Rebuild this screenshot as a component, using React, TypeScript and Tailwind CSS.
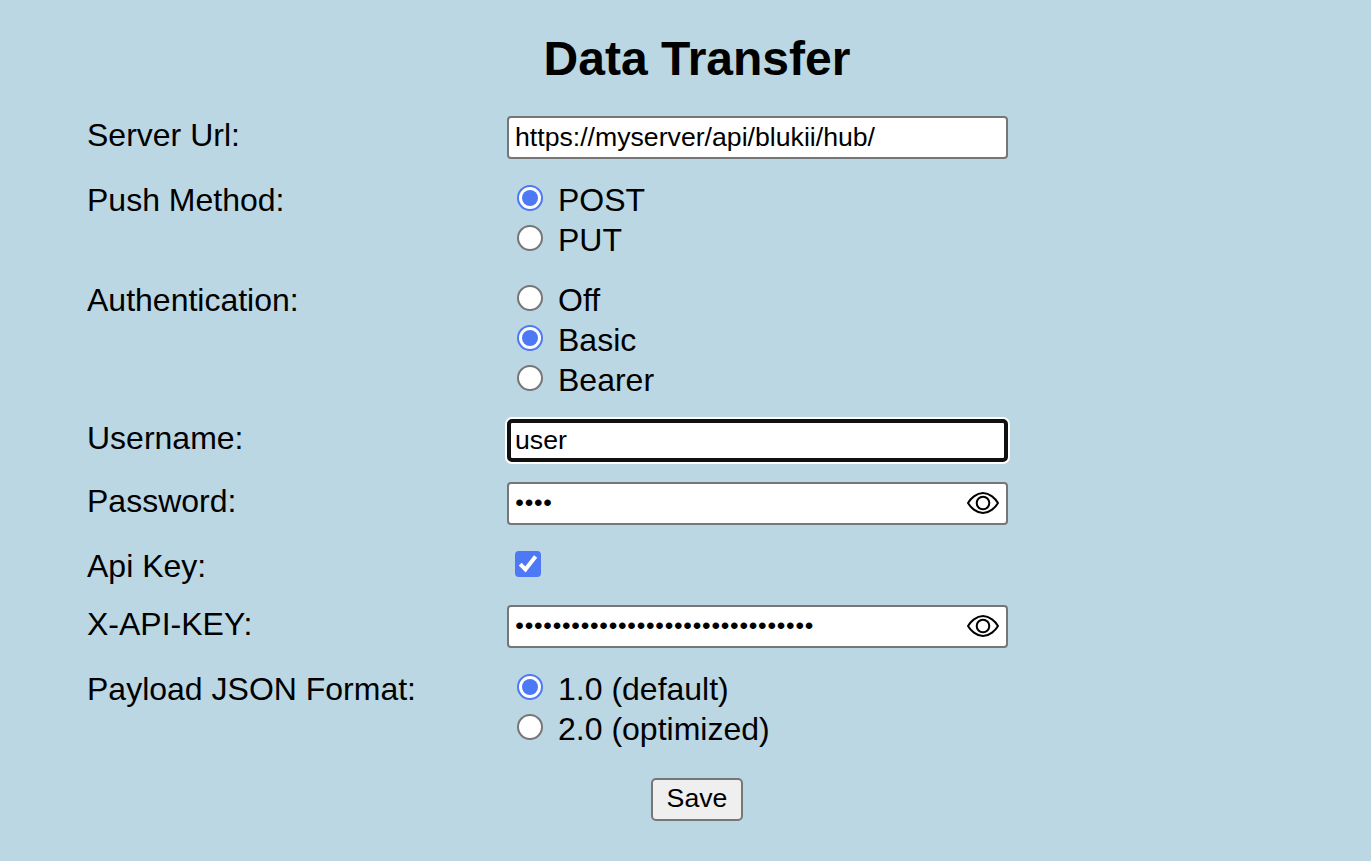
import { useState, type ReactNode } from "react";

function Row({ label, height, children }: { label: string; height: string; children: ReactNode }) {
  return (
    <div className={`flex ${height}`}>
      <div className="w-[420px] shrink-0 text-[32px] leading-10">{label}</div>
      {children}
    </div>
  );
}

const fieldBase =
  "block h-[43px] w-[501px] rounded-[4px] border-2 border-[#767676] bg-white leading-[37px] text-black outline-none";

function TextField({ value, focused = false }: { value: string; focused?: boolean }) {
  const [text, setText] = useState(value);
  return (
    <div className="pt-px">
      <input
        value={text}
        onChange={(e) => setText(e.target.value)}
        className={`${fieldBase} py-0 pl-[6px] text-[26.667px] ${
          focused ? "border-[4px]! border-[#101010]! pl-[4px]! rounded-[5px]! shadow-[0_0_0_2px_#fff]" : ""
        }`}
      />
    </div>
  );
}

function EyeIcon() {
  return (
    <svg width="34" height="24" viewBox="0 0 34 24" fill="none" stroke="#000" strokeWidth="2">
      <path
        d="M2 12C4.6 7.6 10.2 2 17 2C23.8 2 29.4 7.6 32 12C29.4 16.4 23.8 22 17 22C10.2 22 4.6 16.4 2 12Z"
        strokeLinejoin="round"
      />
      <circle cx="17" cy="12" r="6.3" />
    </svg>
  );
}

function PasswordField({ value }: { value: string }) {
  const [text, setText] = useState(value);
  const [visible, setVisible] = useState(false);
  return (
    <div className="relative h-[44px] pt-px">
      <input
        type={visible ? "text" : "password"}
        value={text}
        onChange={(e) => setText(e.target.value)}
        className={`${fieldBase} pt-0 pr-12 pb-[2px] pl-[6.3px] text-[24.5px] tracking-[0.76px]`}
      />
      <button type="button" className="absolute top-[10px] right-[8px]" onClick={() => setVisible(!visible)}>
        <EyeIcon />
      </button>
    </div>
  );
}

function RadioGroup({ options, initial }: { options: string[]; initial: number }) {
  const [selected, setSelected] = useState(initial);
  return (
    <div className="flex flex-col pl-[10px]">
      {options.map((option, i) => (
        <div key={option} className="flex h-10" onClick={() => setSelected(i)}>
          <span
            className={`mt-[5px] flex size-[26px] items-center justify-center rounded-full border-2 bg-white ${
              i === selected ? "border-[#4d78f6]" : "border-[#767676]"
            }`}
          >
            {i === selected && <span className="size-4 rounded-full bg-[#4d78f6]" />}
          </span>
          <span className="pl-[15px] text-[32px] leading-10">{option}</span>
        </div>
      ))}
    </div>
  );
}

function Checkbox() {
  const [checked, setChecked] = useState(true);
  return (
    <div className="pt-[5px] pl-[8px]">
      <div
        className={`size-[26px] rounded-[4px] ${checked ? "bg-[#4d78f6]" : "border-2 border-[#767676] bg-white"}`}
        onClick={() => setChecked(!checked)}
      >
        {checked && (
          <svg width="26" height="26" viewBox="0 0 26 26" fill="none" stroke="#fff" strokeWidth="4">
            <path d="M5.2 13.2L10.4 18.4L20.6 5.4" />
          </svg>
        )}
      </div>
    </div>
  );
}

export default function App() {
  return (
    <main className="h-[861px] w-full overflow-hidden bg-[#bbd7e3] pl-[87px] font-['Liberation_Sans',Arial,sans-serif] text-black">
      <div className="w-[1220px]">
        <h1 className="h-[115px] pt-[31px] text-center text-[48px] leading-[56px] font-bold">Data Transfer</h1>
        <Row label="Server Url:" height="h-[65px]">
          <TextField value="https://myserver/api/blukii/hub/" />
        </Row>
        <Row label="Push Method:" height="h-[100px]">
          <RadioGroup options={["POST", "PUT"]} initial={0} />
        </Row>
        <Row label="Authentication:" height="h-[138px]">
          <RadioGroup options={["Off", "Basic", "Bearer"]} initial={1} />
        </Row>
        <Row label="Username:" height="h-[63px]">
          <TextField value="user" focused />
        </Row>
        <Row label="Password:" height="h-[65px]">
          <PasswordField value="pass" />
        </Row>
        <Row label="Api Key:" height="h-[58px]">
          <Checkbox />
        </Row>
        <Row label="X-API-KEY:" height="h-[65px]">
          <PasswordField value="0123456789abcdef0123456789abcdef" />
        </Row>
        <Row label="Payload JSON Format:" height="h-[109px]">
          <RadioGroup options={["1.0 (default)", "2.0 (optimized)"]} initial={0} />
        </Row>
        <div className="flex justify-center">
          <button
            type="button"
            className="h-[43px] w-[92px] rounded-[5px] border-2 border-[#767676] bg-[#efefef] pb-[3px] text-[26.667px] leading-[36px]"
          >
            Save
          </button>
        </div>
      </div>
    </main>
  );
}
